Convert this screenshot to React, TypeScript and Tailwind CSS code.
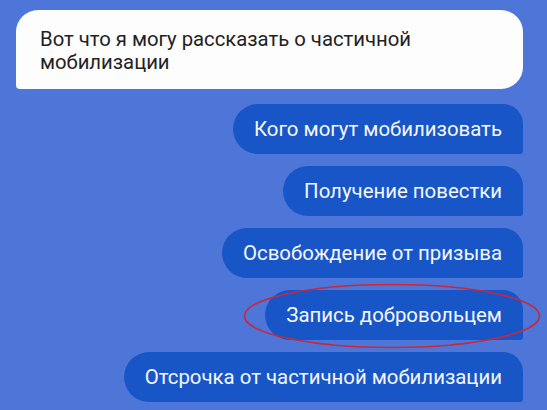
const OPTIONS = [
  'Кого могут мобилизовать',
  'Получение повестки',
  'Освобождение от призыва',
  'Запись добровольцем',
  'Отсрочка от частичной мобилизации',
];

export default function App() {
  return (
    <div
      className="w-[547px] h-[410px] overflow-hidden bg-[#4e76d8] pt-[10px] pl-[16px] pr-[24px]"
      style={{ fontFamily: 'Roboto, "Noto Sans", sans-serif' }}
    >
      {/* bot message */}
      <div className="bg-[#fdfdfd] text-[#222222] text-[20.3px] leading-[23px] rounded-[22px] rounded-bl-[4px] pl-[24px] pr-[20px] pt-[18px] h-[79px]">
        Вот что я могу рассказать о частичной мобилизации
      </div>

      {/* quick replies */}
      <div className="flex flex-col items-end gap-[12px] mt-[15px]">
        {OPTIONS.map((label, i) => (
          <div key={label} className="relative">
            <div className="bg-[#1856c8] text-[#f4f7ff] text-[20.4px] leading-[24px] h-[50px] flex items-center px-[21px] rounded-l-[25px] rounded-tr-[20px] rounded-br-[3px] whitespace-nowrap">
              {label}
            </div>
            {i === 3 && (
              <svg
                className="absolute left-[-22px] top-[-7px] pointer-events-none"
                width="298"
                height="66"
                viewBox="0 0 298 66"
              >
                <ellipse cx="149" cy="33" rx="147.5" ry="31.5" fill="none" stroke="#c8283c" strokeWidth="1.6" />
              </svg>
            )}
          </div>
        ))}
      </div>
    </div>
  );
}
